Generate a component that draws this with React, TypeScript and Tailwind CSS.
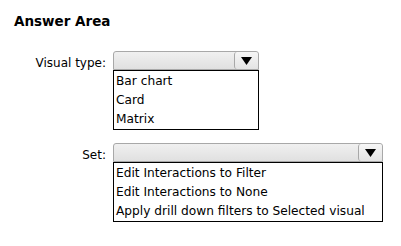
import React from 'react';

const font = { fontFamily: '"DejaVu Sans", Verdana, sans-serif' };

const Dropdown = ({ width, options }: { width: string; options: string[] }) => (
  <div className={`flex flex-col ${width}`}>
    <div className="flex h-[19px] rounded-t-[3px] border border-[#a8a8a8] bg-gradient-to-b from-[#f0f0f0] to-[#e0e0e0]">
      <div className="flex-1" />
      <div className="flex w-[24px] items-center justify-center rounded-[3px] border-l border-[#a8a8a8] bg-gradient-to-b from-[#f6f6f6] to-[#e4e4e4]">
        <svg width="11" height="8" viewBox="0 0 11 8">
          <polygon points="0,0 11,0 5.5,8" fill="#000" />
        </svg>
      </div>
    </div>
    <div className="flex flex-col border border-black bg-white pl-[2px] pt-[1px]">
      {options.map((o) => (
        <div key={o} className="h-[19px] text-[12.2px] leading-[19px] text-black">
          {o}
        </div>
      ))}
    </div>
  </div>
);

export default function App() {
  return (
    <div className="h-[246px] w-[401px] bg-white" style={font}>
      <div className="pl-[14px] pt-[11px] text-[13.5px] font-bold leading-[20px] text-black">Answer Area</div>
      <div className="mt-[20px] flex">
        <div className="w-[113px] pr-[7px] pt-[3px] text-right text-[12px] text-black">Visual type:</div>
        <Dropdown width="w-[146px]" options={['Bar chart', 'Card', 'Matrix']} />
      </div>
      <div className="mt-[13px] flex">
        <div className="w-[113px] pr-[7px] pt-[3px] text-right text-[12px] text-black">Set:</div>
        <Dropdown
          width="w-[270px]"
          options={['Edit Interactions to Filter', 'Edit Interactions to None', 'Apply drill down filters to Selected visual']}
        />
      </div>
    </div>
  );
}
